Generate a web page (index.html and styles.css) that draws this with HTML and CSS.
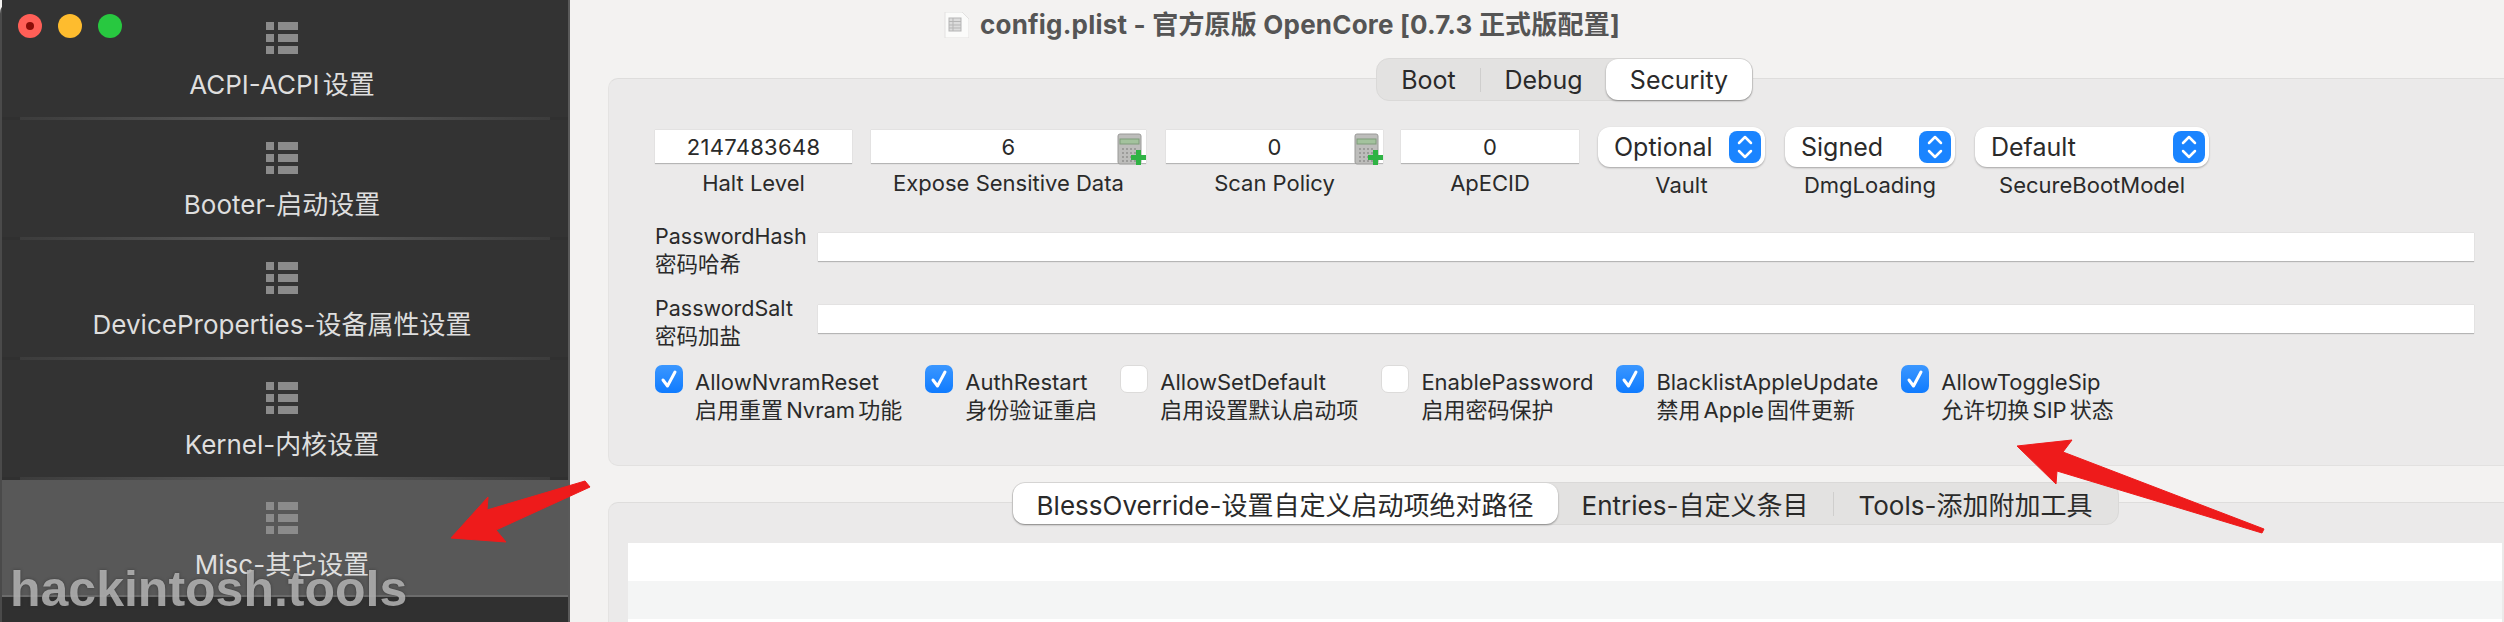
FILE: index.html
```html
<!DOCTYPE html>
<html lang="en">
<head>
    <meta charset="UTF-8">
    <title>config.plist</title>
    <link rel="stylesheet" href="styles.css">
</head>
<body>

<div class="window">

    <div class="sidebar">
        <div class="lights">
            <span class="light red"></span>
            <span class="light yellow"></span>
            <span class="light green"></span>
        </div>

        <div class="navitem">
            <svg class="listicon" viewBox="0 0 32 32"><use href="#list"/></svg>
            <div class="navlabel">ACPI-ACPI 设置</div>
        </div>
        <div class="navsep"></div>
        <div class="navitem">
            <svg class="listicon" viewBox="0 0 32 32"><use href="#list"/></svg>
            <div class="navlabel">Booter-启动设置</div>
        </div>
        <div class="navsep"></div>
        <div class="navitem">
            <svg class="listicon" viewBox="0 0 32 32"><use href="#list"/></svg>
            <div class="navlabel">DeviceProperties-设备属性设置</div>
        </div>
        <div class="navsep"></div>
        <div class="navitem">
            <svg class="listicon" viewBox="0 0 32 32"><use href="#list"/></svg>
            <div class="navlabel">Kernel-内核设置</div>
        </div>
        <div class="navsep"></div>
        <div class="navitem selected">
            <svg class="listicon" viewBox="0 0 32 32"><use href="#list"/></svg>
            <div class="navlabel">Misc-其它设置</div>
        </div>
    </div>

    <div class="main">

        <div class="titlebar">
            <svg class="docicon" viewBox="0 0 25 26">
                <path d="M1 0H18L25 7V26H1Z" fill="#fbfbfa" stroke="#e2e1e0"/>
                <rect x="5" y="6" width="12" height="13" fill="#dcdcdc" stroke="#b5b5b5"/>
                <path d="M5 9.500H17M5 13H17M5 16H17M9 6V19" stroke="#b5b5b5"/>
            </svg>
            <span class="titletext">config.plist - 官方原版 OpenCore [0.7.3 正式版配置]</span>
        </div>

        <div class="panel panel1">
            <div class="tabs">
                <div class="tab tab-boot">Boot</div>
                <div class="tabline"></div>
                <div class="tab tab-debug">Debug</div>
                <div class="tab active tab-security">Security</div>
            </div>

            <div class="fields">
                <div class="field f-halt">
                    <div class="numbox">2147483648</div>
                    <div class="fieldlabel">Halt Level</div>
                </div>
                <div class="field f-expose">
                    <div class="numbox">6
                        <svg class="calc" viewBox="0 0 29 32"><use href="#calc"/></svg>
                    </div>
                    <div class="fieldlabel">Expose Sensitive Data</div>
                </div>
                <div class="field f-scan">
                    <div class="numbox">0
                        <svg class="calc" viewBox="0 0 29 32"><use href="#calc"/></svg>
                    </div>
                    <div class="fieldlabel">Scan Policy</div>
                </div>
                <div class="field f-apecid">
                    <div class="numbox">0</div>
                    <div class="fieldlabel">ApECID</div>
                </div>
                <div class="field f-vault">
                    <div class="select">Optional
                        <svg class="stepper" viewBox="0 0 32 32"><use href="#stepper"/></svg>
                    </div>
                    <div class="fieldlabel sellabel">Vault</div>
                </div>
                <div class="field f-dmg">
                    <div class="select">Signed
                        <svg class="stepper" viewBox="0 0 32 32"><use href="#stepper"/></svg>
                    </div>
                    <div class="fieldlabel sellabel">DmgLoading</div>
                </div>
                <div class="field f-secure">
                    <div class="select">Default
                        <svg class="stepper" viewBox="0 0 32 32"><use href="#stepper"/></svg>
                    </div>
                    <div class="fieldlabel sellabel">SecureBootModel</div>
                </div>
            </div>

            <div class="pwrow">
                <div class="pwlabel">PasswordHash<br>密码哈希</div>
                <div class="pwinput"></div>
            </div>
            <div class="pwrow">
                <div class="pwlabel">PasswordSalt<br>密码加盐</div>
                <div class="pwinput"></div>
            </div>

            <div class="checks">
                <div class="check">
                    <svg class="box on" viewBox="0 0 28 28"><path d="M8 15L12.500 21L20 7" /></svg>
                    <div class="checktext">AllowNvramReset<br>启用重置 Nvram 功能</div>
                </div>
                <div class="check">
                    <svg class="box on" viewBox="0 0 28 28"><path d="M8 15L12.500 21L20 7" /></svg>
                    <div class="checktext">AuthRestart<br>身份验证重启</div>
                </div>
                <div class="check">
                    <svg class="box" viewBox="0 0 28 28"></svg>
                    <div class="checktext">AllowSetDefault<br>启用设置默认启动项</div>
                </div>
                <div class="check">
                    <svg class="box" viewBox="0 0 28 28"></svg>
                    <div class="checktext">EnablePassword<br>启用密码保护</div>
                </div>
                <div class="check">
                    <svg class="box on" viewBox="0 0 28 28"><path d="M8 15L12.500 21L20 7" /></svg>
                    <div class="checktext">BlacklistAppleUpdate<br>禁用 Apple 固件更新</div>
                </div>
                <div class="check">
                    <svg class="box on" viewBox="0 0 28 28"><path d="M8 15L12.500 21L20 7" /></svg>
                    <div class="checktext">AllowToggleSip<br>允许切换 SIP 状态</div>
                </div>
            </div>
        </div>

        <div class="panel panel2">
            <div class="tabs">
                <div class="tab active tab-bless">BlessOverride-设置自定义启动项绝对路径</div>
                <div class="tab tab-entries">Entries-自定义条目</div>
                <div class="tabline"></div>
                <div class="tab tab-tools">Tools-添加附加工具</div>
            </div>
            <div class="table">
                <div class="tablerow"></div>
                <div class="tablerow alt"></div>
                <div class="tablerow"></div>
            </div>
        </div>
    </div>

    <div class="watermark">hackintosh.tools</div>

    <svg class="arrows" viewBox="0 0 2504 622">
        <path d="M451 538L488 497L487 510L585 481L590 487L496 530L506 542Z" />
        <path d="M2017 446L2072 440L2063 452L2264 529L2262 533L2057 471L2056 484Z" />
    </svg>
</div>

<!-- shared icons -->
<svg class="defs" width="0" height="0">
    <defs>
        <g id="list" fill="#8b8b8b">
            <rect x="0" y="0" width="8" height="8"/>
            <rect x="12" y="0" width="20" height="8"/>
            <rect x="0" y="12" width="8" height="8"/>
            <rect x="12" y="12" width="20" height="8"/>
            <rect x="0" y="24" width="8" height="8"/>
            <rect x="12" y="24" width="20" height="8"/>
        </g>
        <g id="calc">
            <rect x="1" y="1" width="23" height="30" rx="2" fill="#bdbdbb" stroke="#9a9a98"/>
            <rect x="3" y="6" width="19" height="5" fill="#a3c29d" stroke="#7f9c7a"/>
            <path d="M5 16H20M5 20H20M5 24H20M5 28H20" stroke="#9c9c9a" stroke-width="2" stroke-dasharray="2 2"/>
            <path d="M19 17H24V22H29V27H24V32H19V27H14V22H19Z" fill="#2fb344"/>
        </g>
        <g id="stepper">
            <rect x="0" y="0" width="32" height="32" rx="8" fill="#1a84ff"/>
            <path d="M10 12L16 6L22 12M10 20L16 26L22 20" fill="none" stroke="#fff" stroke-width="2.500" stroke-linecap="round" stroke-linejoin="round"/>
        </g>
    </defs>
</svg>

</body>
</html>
```

FILE: styles.css
```css
* {
    box-sizing: border-box;
}
body {
    margin: 0;
    background: #f3f2f1;
    font-family: "Inter", "Noto Sans CJK SC", sans-serif;
    color: #2a2a2a;
}
.window {
    position: relative;
    display: flex;
    width: 2504px;
    height: 622px;
    overflow: hidden;
}
.defs {
    position: absolute;
}

/* sidebar */
.sidebar {
    position: relative;
    flex: 0 0 570px;
    background: #303030;
    border-left: 2px solid #4a4a4a;
    border-right: 2px solid #5a5a5a;
    border-top-left-radius: 14px;
}
.lights {
    position: absolute;
    left: 16px;
    top: 14px;
    display: flex;
    gap: 16px;
}
.light {
    width: 24px;
    height: 24px;
    border-radius: 50%;
    display: flex;
    align-items: center;
    justify-content: center;
}
.red {
    background: #ff5f57;
}
.red::after {
    content: "";
    width: 8px;
    height: 8px;
    border-radius: 50%;
    background: #8a0d08;
}
.yellow {
    background: #febc2e;
}
.green {
    background: #28c840;
}
.navitem {
    height: 117px;
    padding: 22px 6px 0 0;
    background: #333;
    display: flex;
    flex-direction: column;
    align-items: center;
}
.navitem.selected {
    background: #585858;
    border-bottom: 2px solid #6c6c6c;
}
.navsep {
    height: 3px;
    padding: 0 18px;
    background: #333;
    background-clip: content-box;
    background-image: linear-gradient(90deg, #3a3a3a, #5c5c5c 50%, #3a3a3a);
}
.listicon {
    width: 32px;
    height: 32px;
}
.navlabel {
    margin-top: 14px;
    font-size: 26px;
    line-height: 34px;
    word-spacing: -4px;
    color: #dedede;
    white-space: nowrap;
}

/* main area */
.main {
    flex: 1;
    min-width: 0;
}
.titlebar {
    height: 78px;
    padding: 12px 0 0 374px;
    display: flex;
    align-items: flex-start;
    gap: 11px;
}
.docicon {
    width: 25px;
    height: 26px;
}
.titletext {
    font-size: 26px;
    line-height: 26px;
    font-weight: 700;
    letter-spacing: 0.2px;
    color: #555;
    white-space: nowrap;
}
.panel {
    margin-left: 38px;
    background: #ebeaea;
    border-top: 1px solid #dedddc;
    border-left: 1px solid #e4e3e2;
    border-top-left-radius: 10px;
}
.panel1 {
    height: 388px;
    padding: 0 30px 0 46px;
    border-bottom: 1px solid #e2e1e0;
    border-bottom-left-radius: 10px;
}
.panel2 {
    margin-top: 36px;
    padding: 0 2px 0 19px;
    height: 130px;
}

/* segmented tabs */
.tabs {
    display: flex;
    align-items: center;
    width: max-content;
    height: 43px;
    margin: -21px auto 0;
    background: #e3e2e1;
    border: 1px solid #dad9d8;
    border-radius: 13px;
    font-size: 25px;
}
.panel2 .tabs {
    font-size: 26px;
}
.tab {
    height: 100%;
    display: flex;
    align-items: center;
    justify-content: center;
    white-space: nowrap;
}
.tab.active {
    background: #fff;
    border-radius: 12px;
    box-shadow: 0 1px 2px rgba(0,0,0,0.4);
}
.tabline {
    width: 1px;
    height: 24px;
    background: #cfcecd;
}
.tab-boot { width: 103px; }
.tab-debug { width: 125px; }
.tab-security { width: 146px; }
.tab-bless { width: 545px; }
.tab-entries { width: 275px; }
.tab-tools { width: 284px; }

/* number boxes and popups */
.fields {
    display: flex;
    align-items: flex-start;
    height: 94px;
    margin-top: 26px;
}
.field {
    display: flex;
    flex-direction: column;
    align-items: center;
}
.f-halt { width: 197px; margin-left: 0; }
.f-expose { width: 275px; margin-left: 19px; }
.f-scan { width: 217px; margin-left: 20px; }
.f-apecid { width: 178px; margin-left: 18px; }
.f-vault { width: 167px; margin-left: 19px; }
.f-dmg { width: 170px; margin-left: 20px; }
.f-secure { width: 234px; margin-left: 20px; }
.numbox {
    position: relative;
    width: 100%;
    height: 34px;
    margin-top: 3px;
    background: #fff;
    border-bottom: 1px solid #b5b5b5;
    box-shadow: 0 0 1px rgba(0,0,0,0.2);
    font-size: 22px;
    letter-spacing: 0.3px;
    line-height: 34px;
    text-align: center;
}
.calc {
    position: absolute;
    right: 0;
    top: 3px;
    width: 29px;
    height: 32px;
}
.fieldlabel {
    margin-top: 4px;
    font-size: 22px;
    line-height: 30px;
    white-space: nowrap;
}
.select {
    width: 100%;
    height: 40px;
    padding: 0 4px 0 16px;
    display: flex;
    align-items: center;
    justify-content: space-between;
    background: #fff;
    border-radius: 12px;
    box-shadow: 0 1px 2px rgba(0,0,0,0.3);
    font-size: 25px;
    white-space: nowrap;
}
.stepper {
    width: 32px;
    height: 32px;
}
.sellabel {
    margin-top: 3px;
}

/* password rows */
.pwrow {
    display: flex;
    align-items: flex-start;
    height: 56px;
    margin-bottom: 16px;
}
.pwlabel {
    width: 163px;
    flex: none;
    padding-top: 1px;
    font-size: 21.500px;
    line-height: 28px;
    white-space: nowrap;
}
.pwinput {
    flex: 1;
    height: 29px;
    margin-top: 12px;
    background: #fff;
    border-bottom: 1px solid #b5b5b5;
    box-shadow: 0 0 1px rgba(0,0,0,0.2);
}

/* checkboxes */
.checks {
    display: flex;
    gap: 23px;
    margin-top: 3px;
}
.check {
    display: flex;
    gap: 12px;
}
.box {
    flex: none;
    width: 28px;
    height: 28px;
    background: #fff;
    border: 1px solid #dcdbda;
    border-radius: 7px;
}
.box.on {
    background: linear-gradient(#3b97ff, #0f7bff);
    border: none;
}
.box path {
    fill: none;
    stroke: #fff;
    stroke-width: 3;
    stroke-linecap: round;
    stroke-linejoin: round;
}
.checktext {
    padding-top: 3px;
    font-size: 22px;
    line-height: 28px;
    word-spacing: -3px;
    white-space: nowrap;
}

/* bottom table */
.table {
    margin-top: 18px;
}
.tablerow {
    height: 38px;
    background: #fff;
}
.tablerow.alt {
    background: #f4f5f5;
}

/* things laid over the screenshot */
.watermark {
    position: absolute;
    left: 10px;
    top: 561px;
    font-family: "Liberation Sans", sans-serif;
    font-size: 50px;
    line-height: 56px;
    font-weight: 700;
    color: rgba(190,190,190,0.8);
    text-shadow: 0 0 3px rgba(40,40,40,0.6);
    white-space: nowrap;
}
.arrows {
    position: absolute;
    left: 0;
    top: 0;
    width: 2504px;
    height: 622px;
    pointer-events: none;
}
.arrows path {
    fill: #ee1b1b;
    stroke: #ee1b1b;
    stroke-width: 1;
    stroke-linejoin: round;
}
```
